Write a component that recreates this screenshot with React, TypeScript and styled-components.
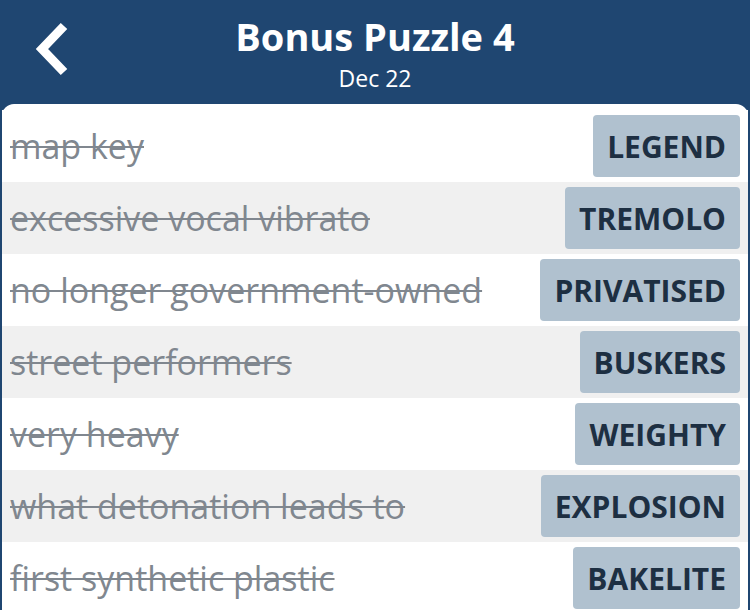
import React from 'react';
import styled, { createGlobalStyle } from 'styled-components';

const clues = [
  { clue: 'map key', answer: 'LEGEND' },
  { clue: 'excessive vocal vibrato', answer: 'TREMOLO' },
  { clue: 'no longer government-owned', answer: 'PRIVATISED' },
  { clue: 'street performers', answer: 'BUSKERS' },
  { clue: 'very heavy', answer: 'WEIGHTY' },
  { clue: 'what detonation leads to', answer: 'EXPLOSION' },
  { clue: 'first synthetic plastic', answer: 'BAKELITE' },
];

const GlobalStyle = createGlobalStyle`
  html, body {
    margin: 0;
    padding: 0;
    background: #1f4671;
    font-family: 'Open Sans', Lato, sans-serif;
  }
`;

const App = () => {
  return (
    <>
      <GlobalStyle />
      <Page>
        <Header>
          <BackButton aria-label="back">
            <svg width="44" height="60" viewBox="0 0 44 60">
              <polyline
                points="31,5 9,28 31,51"
                fill="none"
                stroke="#ffffff"
                strokeWidth="9"
                strokeLinecap="butt"
                strokeLinejoin="miter"
              />
            </svg>
          </BackButton>
          <TitleBlock>
            <Title>Bonus Puzzle 4</Title>
            <SubTitle>Dec 22</SubTitle>
          </TitleBlock>
          <div />
        </Header>
        <Card>
          {clues.map((item, i) => (
            <Row key={item.answer} $shaded={i % 2 === 1}>
              <Clue>{item.clue}</Clue>
              <Answer>{item.answer}</Answer>
            </Row>
          ))}
        </Card>
      </Page>
    </>
  );
};

export default App;

const Page = styled.div`
  width: 750px;
  height: 610px;
  overflow: hidden;
  background: #1f4671;
`;

const Header = styled.div`
  display: grid;
  grid-template-columns: 110px 1fr 110px;
  align-items: center;
  height: 104px;
`;

const BackButton = styled.button`
  display: flex;
  align-items: center;
  justify-content: center;
  width: 60px;
  height: 64px;
  margin-left: 25px;
  margin-top: -2px;
  padding: 0;
  border: none;
  background: transparent;
  cursor: pointer;
`;

const TitleBlock = styled.div`
  display: flex;
  flex-direction: column;
  align-items: center;
  align-self: start;
  padding-top: 14px;
  color: #ffffff;
`;

const Title = styled.h1`
  margin: 0;
  font-size: 38px;
  font-weight: 700;
  line-height: 44px;
`;

const SubTitle = styled.div`
  margin-top: 5px;
  font-size: 23px;
  line-height: 30px;
`;

const Card = styled.div`
  background: #ffffff;
  border-radius: 12px 12px 0 0;
  margin: 0 2px;
  padding-top: 6px;
  height: 506px;
`;

const Row = styled.div<{ $shaded: boolean }>`
  display: flex;
  align-items: center;
  justify-content: space-between;
  height: 72px;
  padding: 0 8px 0 8px;
  background: ${(p) => (p.$shaded ? '#f0f0f0' : '#ffffff')};
`;

const Clue = styled.span`
  font-size: 34px;
  color: #80878f;
  text-decoration: line-through;
  text-decoration-thickness: 2px;
`;

const Answer = styled.div`
  display: flex;
  align-items: center;
  height: 62px;
  padding: 0 14px;
  background: #b0c1cf;
  border-radius: 4px;
  color: #1d2f42;
  font-size: 30px;
  font-weight: 700;
`;
